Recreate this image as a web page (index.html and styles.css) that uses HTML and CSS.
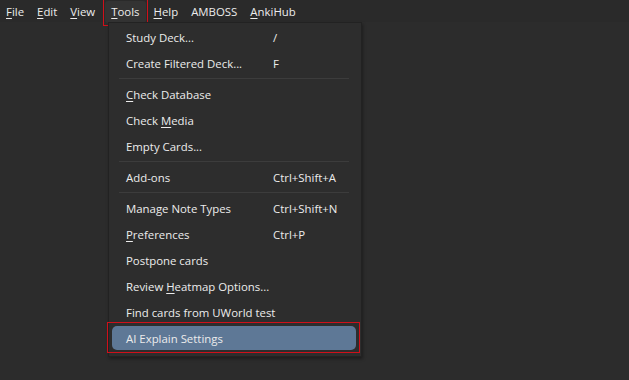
FILE: index.html
```html
<!DOCTYPE html>
<html lang="en">
  <head>
    <meta charset="UTF-8" />
    <title>Anki - Tools</title>
    <link rel="stylesheet" href="styles.css">
  </head>
  <body>
    <!-- Menu bar -->
    <div id="menubar">
      <span class="top-item"><u>F</u>ile</span>
      <span class="top-item"><u>E</u>dit</span>
      <span class="top-item"><u>V</u>iew</span>
      <span class="top-item open"><u>T</u>ools</span>
      <span class="top-item"><u>H</u>elp</span>
      <span class="top-item">AMBOSS</span>
      <span class="top-item"><u>A</u>nkiHub</span>
    </div>

    <!-- Tools dropdown -->
    <div id="dropdown">
      <div class="row"><span class="label">Study Deck...</span><span class="key">/</span></div>
      <div class="row"><span class="label">Create Filtered Deck...</span><span class="key">F</span></div>
      <div class="sep"></div>
      <div class="row"><span class="label"><u>C</u>heck Database</span></div>
      <div class="row"><span class="label">Check <u>M</u>edia</span></div>
      <div class="row"><span class="label">Empty Cards...</span></div>
      <div class="sep"></div>
      <div class="row"><span class="label">Add-ons</span><span class="key">Ctrl+Shift+A</span></div>
      <div class="sep"></div>
      <div class="row"><span class="label">Manage Note Types</span><span class="key">Ctrl+Shift+N</span></div>
      <div class="row"><span class="label"><u>P</u>references</span><span class="key">Ctrl+P</span></div>
      <div class="row"><span class="label">Postpone cards</span></div>
      <div class="row"><span class="label">Review <u>H</u>eatmap Options...</span></div>
      <div class="row"><span class="label">Find cards from UWorld test</span></div>
      <div class="row active"><span class="label">AI Explain Settings</span></div>
    </div>
  </body>
</html>
```

FILE: styles.css
```css
body {
  margin: 0;
  background: #2c2c2c;
  font-family: "Open Sans", "Noto Sans", sans-serif;
  font-size: 11.4px;
  color: #ececec;
  height: 380px;
  overflow: hidden;
}
#menubar {
  display: flex;
  box-sizing: border-box;
  height: 22px;
  align-items: center;
  padding: 2px 0 0 0;
  background: #2a2a2a;
}
.top-item {
  position: relative;
  padding: 3px 6px 4px;
  border-radius: 3px;
  margin-right: 1px;
  white-space: nowrap;
}
.top-item.open {
  background: #333333;
  margin: 0 2px 0 3px;
}
.top-item.open::after {
  content: "";
  position: absolute;
  left: -2px;
  top: -3px;
  right: -2px;
  bottom: -3px;
  border: 1px solid #d0101a;
}
u {
  text-decoration-thickness: 1px;
  text-underline-offset: 2px;
}
#dropdown {
  position: absolute;
  left: 108px;
  top: 22px;
  box-sizing: border-box;
  width: 254px;
  padding: 1px 5px 5px 3px;
  background: #2d2d2d;
  border: 1px solid #222222;
  box-shadow: 1px 2px 3px rgba(0, 0, 0, 0.35);
}
.row {
  position: relative;
  display: flex;
  height: 26px;
  align-items: center;
  padding-left: 14px;
  border-radius: 5px;
  white-space: nowrap;
}
.label {
  flex: 0 0 147px;
}
.sep {
  height: 1px;
  margin: 2px 7px 2px 7px;
  background: #3c3c3c;
}
.row.active {
  height: 24px;
  margin: 1px 0;
  background: #5e7896;
}
.row.active::after {
  content: "";
  position: absolute;
  left: -5px;
  top: -4px;
  right: -4px;
  bottom: -3px;
  border: 1px solid #d0101a;
}
```
